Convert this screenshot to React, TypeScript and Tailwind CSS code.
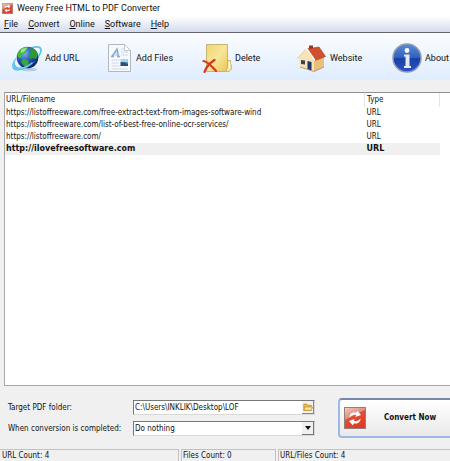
import React, { useState } from "react";

type Entry = { name: string; type: string };

const entries: Entry[] = [
   {
      name: "https://listoffreeware.com/free-extract-text-from-images-software-wind",
      type: "URL",
   },
   {
      name: "https://listoffreeware.com/list-of-best-free-online-ocr-services/",
      type: "URL",
   },
   { name: "https://listoffreeware.com/", type: "URL" },
   { name: "http://ilovefreesoftware.com", type: "URL" },
];

const menus = ["File", "Convert", "Online", "Software", "Help"];

// red tile with two curved arrows, used in the title bar and on the main button
const AppIcon: React.FC<{ className: string; id: string }> = ({
   className,
   id,
}) => (
   <svg viewBox="0 0 22 22" className={className} aria-hidden="true">
      <defs>
         <linearGradient id={id} x1="0" y1="0" x2="0.5" y2="1">
            <stop offset="0" stopColor="#f2cfc4" />
            <stop offset="0.46" stopColor="#e48d7b" />
            <stop offset="0.5" stopColor="#dd4f39" />
            <stop offset="1" stopColor="#e23a22" />
         </linearGradient>
      </defs>
      <rect x="0.5" y="0.5" width="21" height="21" fill={`url(#${id})`} stroke="#93807c" />
      <path d="M5.500 10.500c0-4 3-5.500 6.500-4.800l1.300-2L17 8l-5.500 2 .6-2C9.500 7.500 7.500 8.300 5.500 10.500z" fill="#fff" />
      <path d="M16.500 11.500c0 4-3 5.500-6.500 4.800l-1.300 2L5 14l5.500-2-.6 2c2.600.5 4.600-.3 6.600-2.500z" fill="#fff" />
   </svg>
);

const GlobeIcon = () => (
   <svg viewBox="0 0 30 30" className="size-[30px]" aria-hidden="true">
      <defs>
         <radialGradient id="globe" cx="0.35" cy="0.3" r="0.75">
            <stop offset="0" stopColor="#7eb4f0" />
            <stop offset="0.5" stopColor="#2458b8" />
            <stop offset="1" stopColor="#0b1f66" />
         </radialGradient>
      </defs>
      <ellipse cx="17" cy="26.500" rx="8" ry="1.800" fill="#9fb0c4" opacity="0.6" />
      <path d="M6 14C14 4 29 1 29 7c0 3-2 6-5 9" fill="none" stroke="#5cc4ee" strokeWidth="1.800" />
      <circle cx="15.500" cy="14.500" r="10.800" fill="url(#globe)" />
      <path d="M8 7c3-3 6-3.500 8-2.500l-2 3-1 3-3 1.500-1 3-3-1C5 11 6 9 8 7z" fill="#46b83a" />
      <path d="M18 5c4 0 7 3 8 7l-2 4-3-1-3 1-1-4 2-3z" fill="#2d9a35" />
      <path d="M11 16l5 1 1 3-3 4-3-2-2-3z" fill="#38a83a" />
      <path d="M9 7c2-2 5-2 6-2l-3 4-3 1z" fill="#b8eba2" opacity="0.8" />
      <path d="M4.500 14c-7 8-5 14.500 2.500 13.500 7-1 14-6 19-12.500-5 6-12 9.500-17 9.500-7 .5-7.500-5-4.500-10.500z" fill="#52bdeb" />
      <path d="M3.500 16c-4 6-2.500 10.500 3 10 5-.5 10-3.500 14-6.500" fill="none" stroke="#6fcdf2" strokeWidth="1.200" />
   </svg>
);

const FileIcon = () => (
   <svg viewBox="0 0 26 30" className="h-[30px] w-[26px]" aria-hidden="true">
      <path d="M1.500 1.500h16l6 6v21h-22z" fill="#f7fafd" stroke="#b3b8be" />
      <path d="M17.500 1.500v6h6z" fill="#fff" stroke="#b5babf" strokeWidth="0.800" />
      <path d="M5 13l5-8 2 8z" fill="#cfe0f3" />
      <path d="M5 13.500L10 6l1.500 7.500M4 13.500h3M10 13.500h3" fill="none" stroke="#84a9d6" strokeWidth="1.400" />
      <path d="M14 6h3M14 9h7M14 12h7M4.500 17h8M4.500 20h7M4.500 23h8M4.500 26h16" stroke="#c9d8ea" />
      <rect x="13.500" y="16" width="7.500" height="3" fill="#a5d6ef" />
      <path d="M13.500 19H21v4h-7.500z" fill="#334c73" />
      <path d="M13.500 19.500l3-.5 4.500 2v-2h-7.500z" fill="#519cb4" />
   </svg>
);

const DeleteIcon = () => (
   <svg viewBox="0 0 30 30" className="size-[30px]" aria-hidden="true">
      <defs>
         <linearGradient id="folder" x1="0" y1="0" x2="1" y2="1">
            <stop offset="0" stopColor="#f1d571" />
            <stop offset="0.5" stopColor="#f7e69a" />
            <stop offset="1" stopColor="#eac650" />
         </linearGradient>
      </defs>
      <path d="M24 17.500h4.500v3l.8 1v5l-2.300 2h-3z" fill="#f6e3a0" stroke="#c9ad5c" strokeWidth="0.800" />
      <path d="M4.500 1.500h21v23l-2 4h-19z" fill="url(#folder)" stroke="#c2ad6b" strokeWidth="0.900" />
      <path d="M27.300 19v7" stroke="#fff9db" strokeWidth="1.500" />
      <path d="M1.500 18c5 1 9 6 12.500 10M12.500 17C8 20 4 24 2.500 29" fill="none" stroke="#d4391b" strokeWidth="2.200" strokeLinecap="round" />
   </svg>
);

const HouseIcon = () => (
   <svg viewBox="0 0 30 30" className="size-[30px]" aria-hidden="true">
      <path d="M12 7V2.500h4V8z" fill="#8b3b20" />
      <path d="M2 14l8-8 7 10v12L3 24z" fill="#f7e3b4" />
      <path d="M17 15l10-1v10l-10 4.500z" fill="#e8c07c" />
      <path d="M9.500 6L22 4l6.500 9.500L18 17.500z" fill="#cf4f2f" stroke="#a63520" strokeWidth="0.600" />
      <path d="M0.800 14.500L9.500 5.500l8.500 12" fill="none" stroke="#fffaf0" strokeWidth="1.600" />
      <path d="M0.500 15.500l8-9" stroke="#c7a678" strokeWidth="0.700" />
      <path d="M4 17l4 .5v4L4 21z" fill="#35435c" />
      <path d="M10.500 18l4 1v8.500l-4-1.200z" fill="#1f356b" />
      <path d="M3 24l14 4.500L27 24" fill="none" stroke="#a98b5c" strokeWidth="0.800" />
   </svg>
);

const InfoIcon = () => (
   <svg viewBox="0 0 30 30" className="size-[30px]" aria-hidden="true">
      <defs>
         <linearGradient id="info" x1="0" y1="0" x2="0" y2="1">
            <stop offset="0" stopColor="#5b8bd8" />
            <stop offset="0.48" stopColor="#2f62bb" />
            <stop offset="0.52" stopColor="#1841a3" />
            <stop offset="1" stopColor="#2c50c9" />
         </linearGradient>
      </defs>
      <circle cx="15" cy="15" r="14" fill="url(#info)" stroke="#8f9bb0" strokeWidth="1.500" />
      <circle cx="15" cy="7.500" r="2.400" fill="#fff" />
      <path d="M12 11.500h5.500V23H19v2h-7v-2h1.500v-9.500H12z" fill="#e6e8ee" />
   </svg>
);

const FolderIcon = () => (
   <svg viewBox="0 0 12 12" className="size-[10px]" aria-hidden="true">
      <path d="M1 10V2.500h3.500l1 1.500H10v6z" fill="#efbd45" stroke="#b98a35" strokeWidth="0.900" />
      <path d="M1 10l1.500-4H11.500L10 10z" fill="#fde59a" stroke="#b98a35" strokeWidth="0.800" />
   </svg>
);

const tools = [
   { label: "Add URL", icon: <GlobeIcon /> },
   { label: "Add Files", icon: <FileIcon /> },
   { label: "Delete", icon: <DeleteIcon /> },
   { label: "Website", icon: <HouseIcon /> },
   { label: "About", icon: <InfoIcon /> },
];

const App: React.FC = () => {
   const [selected, setSelected] = useState(3);
   const [folder, setFolder] = useState("C:\\Users\\INKLIK\\Desktop\\LOF");

   return (
      <div className="flex h-screen flex-col overflow-hidden bg-[#f0f0f0] font-['DejaVu_Sans_Condensed','DejaVu_Sans',sans-serif] text-[8px] leading-3 text-[#111]">
         <header className="flex h-4 shrink-0 items-center gap-1 bg-white px-0.5">
            <AppIcon className="size-[11px]" id="titleIcon" />
            <h1 className="font-['Roboto',sans-serif] text-[9px]">
               Weeny Free HTML to PDF Converter
            </h1>
         </header>

         <nav className="flex h-[17px] shrink-0 items-center gap-[10px] border-b border-[#62656e] bg-linear-to-b from-white to-[#d4dbed] px-1 font-['Roboto',sans-serif] text-[9px]">
            {menus.map((menu) => (
               <button key={menu}>
                  <span className="underline">{menu[0]}</span>
                  {menu.slice(1)}
               </button>
            ))}
         </nav>

         <div className="flex h-[47px] shrink-0 items-start overflow-hidden bg-linear-to-b from-[#fbfdff] to-[#dfedfe] pt-[10px] pl-3 font-['Roboto',sans-serif] text-[9px]">
            {tools.map(({ label, icon }) => (
               <button
                  key={label}
                  className="flex w-[95px] shrink-0 items-center gap-[3px] whitespace-nowrap"
               >
                  {icon}
                  {label}
               </button>
            ))}
         </div>

         <main className="flex min-h-0 flex-1 flex-col pt-3">
            <div className="ml-1 min-h-0 flex-1 overflow-hidden border border-r-0 border-[#a3a7ae] border-t-[#8e9096] bg-white">
               <table className="w-[435px] table-fixed border-collapse text-left">
                  <thead>
                     <tr className="h-[14px]">
                        <th className="px-px py-0 font-normal">URL/Filename</th>
                        <th className="w-[75px] border-x border-[#e5e5e5] px-0.5 py-0 font-normal">
                           Type
                        </th>
                     </tr>
                  </thead>
                  <tbody>
                     {entries.map((entry, i) => (
                        <tr
                           key={entry.name}
                           onClick={() => setSelected(i)}
                           className={
                              i === selected
                                 ? "h-3 bg-[#f0f0f0] font-['DejaVu_Sans',sans-serif] font-bold"
                                 : "h-3"
                           }
                        >
                           <td className="truncate px-px py-0">{entry.name}</td>
                           <td className="px-0.5 py-0">{entry.type}</td>
                        </tr>
                     ))}
                  </tbody>
               </table>
            </div>

            <div className="flex shrink-0 gap-[23px] pt-3 pb-[11px] pl-2">
               <div className="grid shrink-0 grid-cols-[125px_182px] content-center items-center gap-y-[6px]">
                  <label htmlFor="folder">Target PDF folder:</label>
                  <div className="flex h-[15px] border border-[#d8d8d8] border-t-[#777] border-l-[#777] bg-white">
                     <input
                        id="folder"
                        value={folder}
                        onChange={(e) => setFolder(e.target.value)}
                        className="min-w-0 flex-1 pl-px outline-none"
                     />
                     <button
                        aria-label="Browse"
                        className="flex w-3 items-center justify-center border-r border-b border-[#888] bg-[#f0f0f0]"
                     >
                        <FolderIcon />
                     </button>
                  </div>
                  <label htmlFor="done">When conversion is completed:</label>
                  <div className="relative h-[15px] border border-[#d8d8d8] border-t-[#777] border-l-[#777] bg-white">
                     <select
                        id="done"
                        className="block h-full w-full appearance-none pl-px outline-none"
                     >
                        <option>Do nothing</option>
                        <option>Shut down</option>
                     </select>
                     <span className="pointer-events-none absolute inset-y-0 right-0 flex w-3 items-center justify-center border-r border-b border-[#777] bg-[#f0f0f0]">
                        <svg viewBox="0 0 6 4" className="h-[4px] w-[6px]" aria-hidden="true">
                           <path d="M0 0h6L3 4z" fill="#111" />
                        </svg>
                     </span>
                  </div>
               </div>
               <button className="flex h-10 w-[140px] shrink-0 items-center gap-[18px] rounded-sm border-2 border-[#9db8e4] border-t-[#7488a8] bg-linear-to-b from-white to-[#e9e9e9] pl-1 font-bold">
                  <AppIcon className="size-[22px]" id="convertIcon" />
                  Convert Now
               </button>
            </div>
         </main>

         <footer className="flex h-3 shrink-0 gap-0.5 overflow-hidden whitespace-nowrap">
            <span className="w-[179px] shrink-0 border-t border-r border-[#c2c2c2] pl-0.5">URL Count: 4</span>
            <span className="w-[95px] shrink-0 border-x border-t border-[#c2c2c2] pl-px">Files Count: 0</span>
            <span className="flex-1 border-t border-l border-[#c2c2c2] pl-px">URL/Files Count: 4</span>
         </footer>
      </div>
   );
};

export default App;
